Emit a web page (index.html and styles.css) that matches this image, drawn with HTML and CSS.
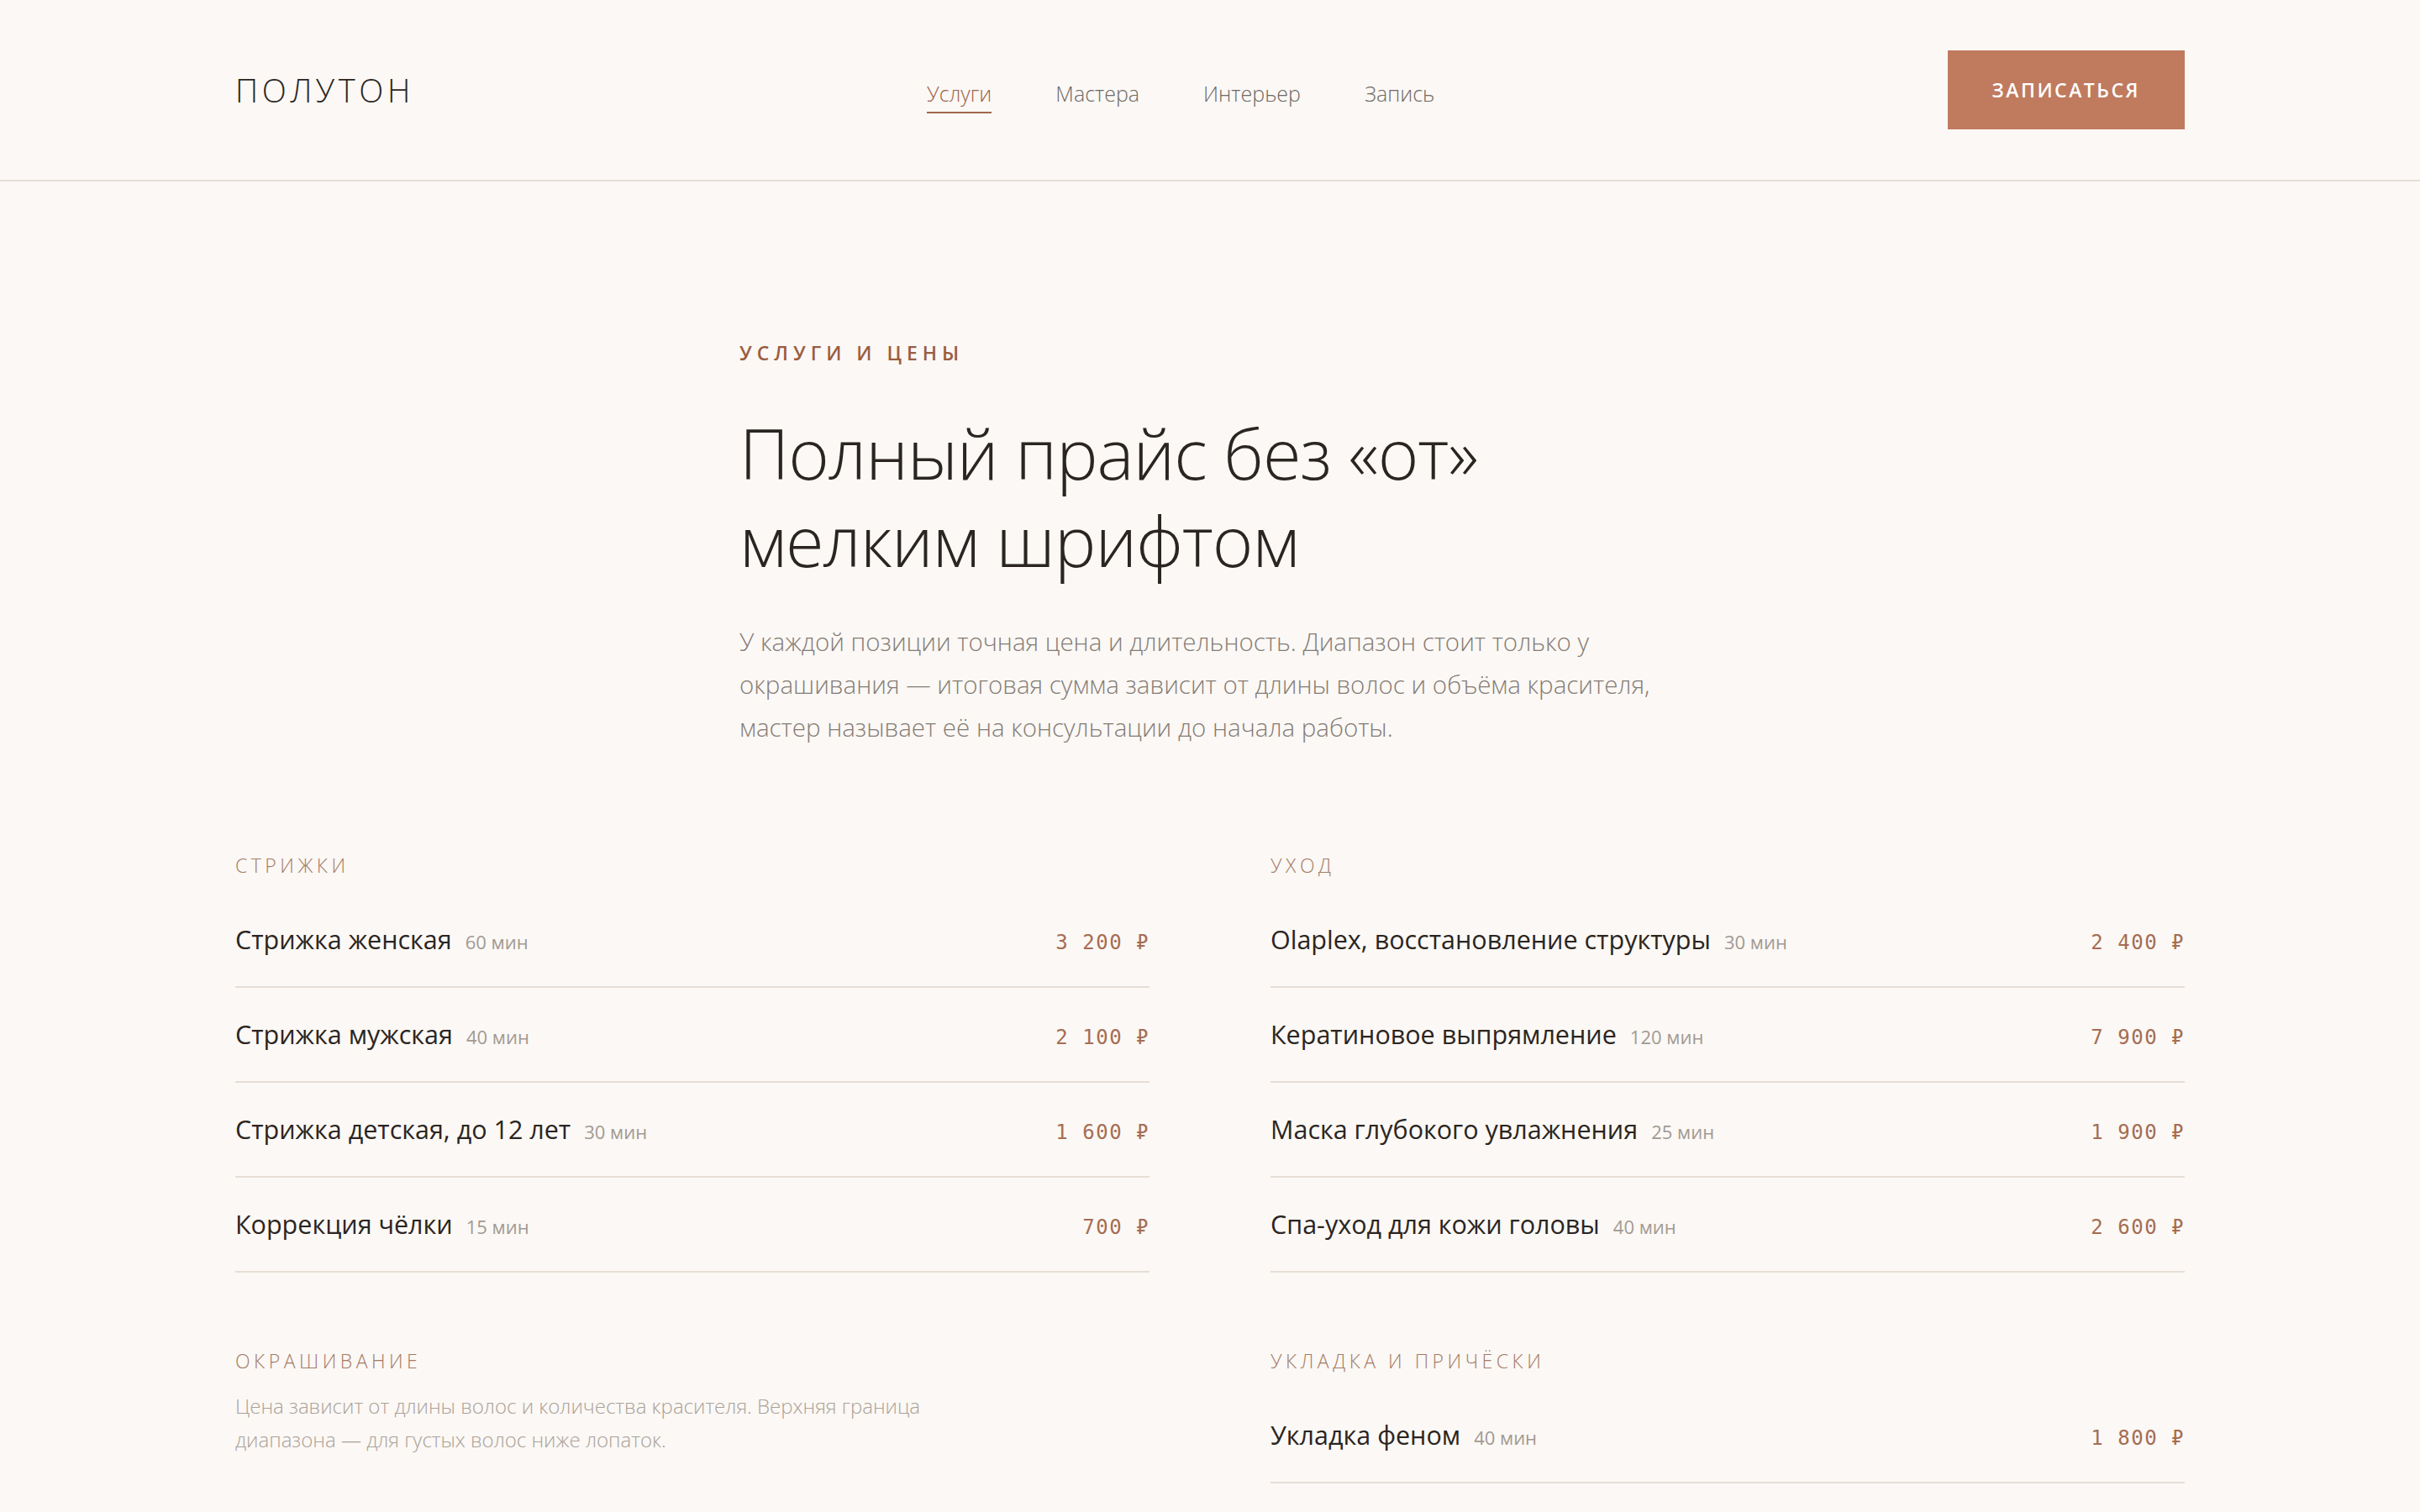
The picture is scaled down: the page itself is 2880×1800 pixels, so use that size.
FILE: index.html
```html
<!DOCTYPE html>
<html lang="ru">
<head>
    <meta charset="UTF-8">
    <meta name="viewport" content="width=device-width, initial-scale=1.0">
    <title>Полутон — услуги и цены</title>
    <link rel="stylesheet" href="styles.css">
</head>
<body>
    <header class="site-header">
        <div class="header-inner">
            <a class="logo" href="#">Полутон</a>
            <nav class="main-nav">
                <a class="active" href="#">Услуги</a>
                <a href="#">Мастера</a>
                <a href="#">Интерьер</a>
                <a href="#">Запись</a>
            </nav>
            <a class="btn-book" href="#">Записаться</a>
        </div>
    </header>

    <main>
        <section class="intro">
            <p class="eyebrow">Услуги и цены</p>
            <h1>Полный прайс без «от»<br>мелким шрифтом</h1>
            <p class="lead">У каждой позиции точная цена и длительность. Диапазон стоит только у окрашивания — итоговая сумма зависит от длины волос и объёма красителя, мастер называет её на консультации до начала работы.</p>
        </section>

        <section class="price-list">
            <div class="price-group">
                <h3 class="group-title">Стрижки</h3>
                <div class="price-row">
                    <span class="name">Стрижка женская</span><span class="time">60 мин</span>
                    <span class="price">3 200 ₽</span>
                </div>
                <div class="price-row">
                    <span class="name">Стрижка мужская</span><span class="time">40 мин</span>
                    <span class="price">2 100 ₽</span>
                </div>
                <div class="price-row">
                    <span class="name">Стрижка детская, до 12 лет</span><span class="time">30 мин</span>
                    <span class="price">1 600 ₽</span>
                </div>
                <div class="price-row">
                    <span class="name">Коррекция чёлки</span><span class="time">15 мин</span>
                    <span class="price">700 ₽</span>
                </div>
            </div>

            <div class="price-group">
                <h3 class="group-title">Уход</h3>
                <div class="price-row">
                    <span class="name">Olaplex, восстановление структуры</span><span class="time">30 мин</span>
                    <span class="price">2 400 ₽</span>
                </div>
                <div class="price-row">
                    <span class="name">Кератиновое выпрямление</span><span class="time">120 мин</span>
                    <span class="price">7 900 ₽</span>
                </div>
                <div class="price-row">
                    <span class="name">Маска глубокого увлажнения</span><span class="time">25 мин</span>
                    <span class="price">1 900 ₽</span>
                </div>
                <div class="price-row">
                    <span class="name">Спа-уход для кожи головы</span><span class="time">40 мин</span>
                    <span class="price">2 600 ₽</span>
                </div>
            </div>

            <div class="price-group">
                <h3 class="group-title">Окрашивание</h3>
                <p class="group-note">Цена зависит от длины волос и количества красителя. Верхняя граница диапазона — для густых волос ниже лопаток.</p>
                <div class="price-row">
                    <span class="name">Тонирование</span><span class="time">90 мин</span>
                    <span class="price">4 500 ₽</span>
                </div>
                <div class="price-row">
                    <span class="name">Окрашивание в один тон</span><span class="time">120 мин</span>
                    <span class="price">5 800 ₽</span>
                </div>
            </div>

            <div class="price-group">
                <h3 class="group-title">Укладка и причёски</h3>
                <div class="price-row">
                    <span class="name">Укладка феном</span><span class="time">40 мин</span>
                    <span class="price">1 800 ₽</span>
                </div>
                <div class="price-row">
                    <span class="name">Вечерняя причёска</span><span class="time">90 мин</span>
                    <span class="price">4 200 ₽</span>
                </div>
            </div>
        </section>
    </main>
</body>
</html>
```

FILE: styles.css
```css
body {
    margin: 0;
    background-color: #fbf8f5;
    color: #2b2521;
    font-family: "Open Sans", "Noto Sans", sans-serif;
}
a {
    color: inherit;
    text-decoration: none;
}
.site-header {
    border-bottom: 2px solid #e6ded5;
}
.header-inner {
    width: 2320px;
    margin: 0 auto;
    padding: 60px 0;
    display: flex;
    justify-content: space-between;
    align-items: center;
}
.logo {
    font-size: 38px;
    font-weight: 300;
    line-height: 38px;
    letter-spacing: 4.6px;
    text-transform: uppercase;
}
.main-nav {
    display: flex;
    gap: 76px;
}
.main-nav a {
    font-size: 25px;
    font-weight: 300;
    line-height: 36px;
    color: #6f6963;
    padding: 14px 0 4px;
    border-bottom: 2px solid transparent;
}
.main-nav a.active {
    color: #9c6349;
    border-bottom-color: #a0674b;
}
.btn-book {
    background-color: #c07a5e;
    color: #fff;
    font-size: 23px;
    font-weight: 600;
    line-height: 34px;
    letter-spacing: 2.5px;
    text-transform: uppercase;
    padding: 30px 53px;
}
.intro {
    width: 1120px;
    margin: 0 auto;
    padding-top: 188px;
}
.eyebrow {
    margin: 0;
    font-size: 23px;
    font-weight: 600;
    line-height: 32px;
    letter-spacing: 6px;
    text-transform: uppercase;
    color: #9a5d41;
}
h1 {
    margin: 51px 0 0;
    font-size: 83px;
    font-weight: 300;
    line-height: 104px;
    letter-spacing: -1px;
}
.lead {
    margin: 43px 0 0;
    font-size: 29.5px;
    font-weight: 300;
    line-height: 51px;
    color: #857c75;
}
.price-list {
    width: 2320px;
    margin: 0 auto;
    padding-top: 123px;
    display: grid;
    grid-template-columns: 1fr 1fr;
    column-gap: 144px;
    row-gap: 89px;
}
.group-title {
    margin: 0 0 17px;
    font-size: 23px;
    font-weight: 300;
    line-height: 32px;
    letter-spacing: 4.5px;
    text-transform: uppercase;
    color: #a47a63;
}
.group-note {
    margin: 18px 0 40px;
    max-width: 880px;
    font-size: 24px;
    font-weight: 300;
    line-height: 40px;
    color: #aaa198;
}
.price-row {
    display: flex;
    align-items: baseline;
    height: 45px;
    padding: 33px 0;
    line-height: 45px;
    border-bottom: 2px solid #e6ded5;
}
.name {
    font-size: 30.5px;
}
.time {
    margin-left: 16px;
    font-size: 22px;
    color: #a29a92;
}
.price {
    margin-left: auto;
    font-family: "DejaVu Sans Mono", "Liberation Mono", monospace;
    font-size: 24px;
    letter-spacing: 1.5px;
    color: #a56d53;
}
```
